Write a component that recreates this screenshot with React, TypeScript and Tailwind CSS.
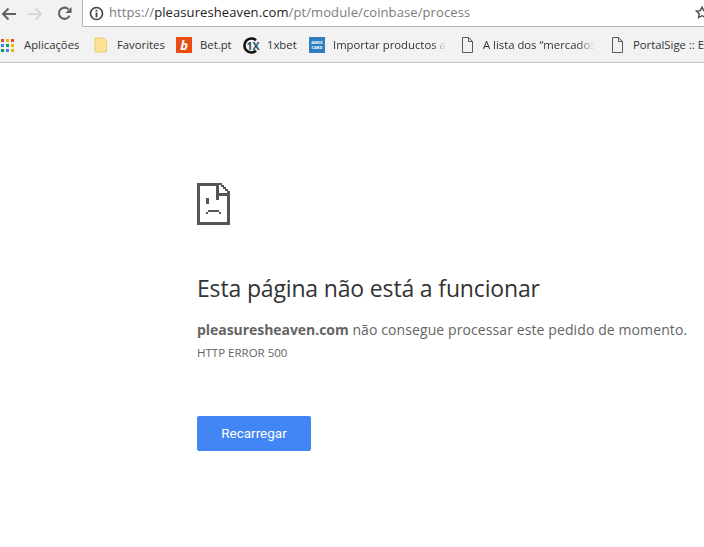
import React from "react";

const ui = { fontFamily: '"Open Sans", "Noto Sans", sans-serif' };

function PageIcon() {
  return (
    <svg width="14" height="16" viewBox="0 0 14 16" fill="none" stroke="#5a5a5a" strokeWidth="1" className="shrink-0">
      <path d="M2.5 0.5H8.5L12.5 4.5V15.5H2.5Z" />
      <path d="M8.5 0.5V4.5H12.5" />
    </svg>
  );
}

function Bookmark({ icon, label, className, textClass }: { icon: React.ReactNode; label: string; className: string; textClass?: string }) {
  return (
    <div className={`flex items-center shrink-0 ${className}`}>
      {icon}
      <span className={`text-[11.3px] text-[#333] whitespace-nowrap overflow-hidden ${textClass ?? ""}`}>{label}</span>
    </div>
  );
}

export default function App() {
  const colors = ["#e8453c", "#f4b400", "#e8453c", "#4285f4", "#0f9d58", "#f4b400", "#0f9d58", "#4285f4", "#f4b400"];
  return (
    <div className="w-[704px] h-[547px] bg-white overflow-hidden flex flex-col" style={ui}>
      <div className="h-[63px] shrink-0 bg-[#f2f2f2] border-b border-[#c4c4c4] flex flex-col">
        <div className="h-[27px] flex shrink-0">
          <div className="w-[82px] shrink-0 flex items-center">
            <svg width="15" height="14" viewBox="0 0 15 14" fill="none" strokeWidth="2" stroke="#5f6368" className="ml-[1px]">
              <path d="M15 7H2M7.5 1.5L2 7L7.5 12.5" />
            </svg>
            <svg width="15" height="14" viewBox="0 0 15 14" fill="none" strokeWidth="2" stroke="#d8d8d8" className="ml-[12px]">
              <path d="M0 7H13M7.5 1.5L13 7L7.5 12.5" />
            </svg>
            <svg width="15" height="15" viewBox="0 0 16 16" fill="none" className="ml-[14px]">
              <path d="M13.4 10.5A6 6 0 1 1 12.4 3.6" stroke="#5f6368" strokeWidth="2.2" />
              <path d="M15.5 1V7.5H9Z" fill="#5f6368" />
            </svg>
          </div>
          <div className="flex-1 bg-white border-l border-b border-[#b4b4b4] rounded-bl-[2px] flex items-center relative">
            <svg width="15" height="15" viewBox="0 0 16 16" fill="none" className="ml-[6px] shrink-0">
              <circle cx="8" cy="8" r="6.4" stroke="#444" strokeWidth="1.8" />
              <path d="M8 7V12M8 4V5.8" stroke="#444" strokeWidth="2" />
            </svg>
            <span className="ml-[5px] text-[13px] text-[#7b7b7b] whitespace-nowrap tracking-[0.1px]">
              https://<span className="text-[#222]">pleasuresheaven.com</span>/pt/module/coinbase/process
            </span>
            <svg width="14" height="15" viewBox="0 0 24 24" fill="none" stroke="#444" strokeWidth="2.2" className="absolute left-[612px] top-[5px]">
              <path d="M12 2.5l2.9 6.2 6.8.8-5 4.6 1.3 6.7L12 17.5l-6 3.3 1.3-6.7-5-4.6 6.8-.8z" />
            </svg>
          </div>
        </div>
        <div className="flex-1 flex items-center overflow-hidden pt-[1px]">
          <Bookmark
            className="ml-[1px] w-[92px]"
            label="Aplicações"
            icon={
              <div className="grid grid-cols-3 gap-[2px] w-[13px] h-[13px] mr-[10px] shrink-0">
                {colors.map((c, i) => (
                  <div key={i} style={{ background: c }} />
                ))}
              </div>
            }
          />
          <Bookmark
            className="w-[83px]"
            label="Favorites"
            icon={
              <svg width="13" height="16" viewBox="0 0 13 16" className="mr-[10px] shrink-0 ml-[1px]">
                <path d="M1 1H9.5L12.5 4V14.5L11 15H1Z" fill="#fde293" stroke="#eccb72" />
              </svg>
            }
          />
          <Bookmark
            className="w-[67px]"
            label="Bet.pt"
            icon={
              <div className="w-[16px] h-[16px] bg-[#ea4c12] text-white text-[13px] font-bold italic leading-[16px] text-center mr-[8px] shrink-0">
                b
              </div>
            }
          />
          <Bookmark
            className="w-[66px]"
            label="1xbet"
            icon={
              <svg width="17" height="17" viewBox="0 0 17 17" className="mr-[7px] shrink-0">
                <path d="M13 3.2A7 7 0 1 0 13 13.8" fill="none" stroke="#111" strokeWidth="2.6" />
                <text x="3.6" y="12.5" fontSize="10.5" fontWeight="700" fill="#1f4e63" fontFamily="Open Sans, sans-serif">1X</text>
              </svg>
            }
          />
          <Bookmark
            className="w-[151px]"
            label="Importar productos a"
            textClass="w-[113px] [mask-image:linear-gradient(to_right,black_88%,transparent)]"
            icon={
              <div className="w-[16px] h-[16px] bg-[#2f7fc0] mr-[8px] shrink-0 flex flex-col items-center justify-center text-white text-[4px] leading-[5px] font-bold">
                <span>AMEX</span>
                <span>CARD</span>
              </div>
            }
          />
          <Bookmark
            className="w-[150px]"
            label="A lista dos “mercados"
            textClass="w-[112px] [mask-image:linear-gradient(to_right,black_85%,transparent)]"
            icon={<div className="mr-[9px] flex"><PageIcon /></div>}
          />
          <Bookmark
            className="w-[94px]"
            label="PortalSige :: E"
            icon={<div className="mr-[9px] flex"><PageIcon /></div>}
          />
        </div>
      </div>

      <main className="flex-1 pl-[197px] pt-[120px] flex flex-col items-start">
        <svg width="33" height="42" viewBox="0 0 33 42" fill="#555" shapeRendering="crispEdges">
          <path d="M0 0H22V3H3V39H30V13H33V42H0Z" />
          <path d="M19 0H22V17H19Z" />
          <path d="M19 10H33V13H19Z" />
          <path d="M22 0H25V2H27V4H29V6H31V8H33V10H30V8H28V6H26V4H24V2H22Z" />
          <path d="M9 15H12V21H9Z" />
          <path d="M11 27H22V29H11ZM9 29H11V31H9ZM22 29H24V31H22Z" />
        </svg>
        <h1 className="mt-[48px] text-[23px] tracking-[-0.16px] leading-[30px] font-normal text-[#333] whitespace-nowrap">
          Esta página não está a funcionar
        </h1>
        <p className="mt-[17px] text-[14px] tracking-[0.1px] leading-[20px] text-[#646464] whitespace-nowrap">
          <b className="font-bold tracking-[-0.05px]">pleasuresheaven.com</b> não consegue processar este pedido de momento.
        </p>
        <p className="mt-[5px] text-[11.5px] leading-[16px] text-[#646464] whitespace-nowrap">HTTP ERROR 500</p>
        <button className="mt-[55px] w-[114px] h-[35px] rounded-[2px] bg-[#4285f4] text-white text-[13.5px] font-normal" style={{ fontFamily: "Roboto, sans-serif" }}>
          Recarregar
        </button>
      </main>
    </div>
  );
}
